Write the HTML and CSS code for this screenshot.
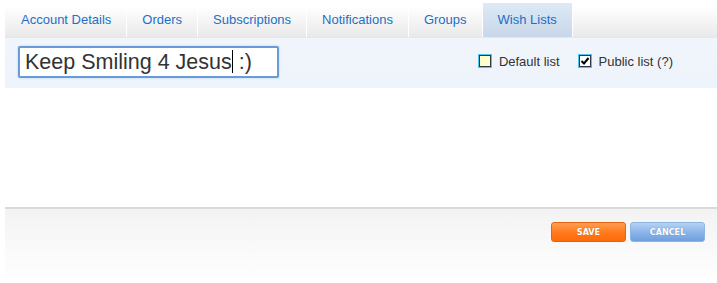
FILE: index.html
```html
<!DOCTYPE html>
<html lang="en">
<head>
<meta charset="UTF-8">
<meta name="viewport" content="width=device-width, initial-scale=1.0">
<title>Wish Lists</title>
<link rel="stylesheet" href="styles.css">
</head>
<body>

<div class="account">
    <ul class="tabs">
        <li class="tab">Account Details</li>
        <li class="tab">Orders</li>
        <li class="tab">Subscriptions</li>
        <li class="tab">Notifications</li>
        <li class="tab">Groups</li>
        <li class="tab active">Wish Lists</li>
    </ul>

    <div class="list-bar">
        <div class="list-name">Keep Smiling 4 Jesus<span class="caret"></span> :)</div>

        <div class="options">
            <label class="option">
                <span class="check"></span>
                Default list
            </label>
            <label class="option">
                <span class="check checked">
                    <svg width="10" height="10" viewBox="0 0 10 10"><path d="M1.5 5 L4 7.5 L8.5 2" fill="none" stroke="#000" stroke-width="2"/></svg>
                </span>
                Public list (?)
            </label>
        </div>
    </div>

    <div class="list-body"></div>

    <div class="footer">
        <button class="btn save">SAVE</button>
        <button class="btn cancel">CANCEL</button>
    </div>
</div>

</body>
</html>
```

FILE: styles.css
```css
body {
    margin: 0;
    font-family: "Liberation Sans", Arial, sans-serif;
    background: #fff;
}
.account {
    padding: 3px 0 0 5px;
}
.tabs {
    display: flex;
    margin: 0;
    padding: 0;
    list-style: none;
    height: 34px;
    border-bottom: 1px solid #e4e8ee;
    background: linear-gradient(#fff, #fff 10%, #e9e9e9);
}
.tab {
    padding: 0 15px;
    line-height: 34px;
    font-size: 13px;
    color: #1d6fc6;
    border-left: 1px solid #fff;
}
.tab:first-child {
    border-left: none;
    padding-left: 16px;
}
.tab.active {
    background: linear-gradient(#dde9f7, #c8d7e8);
    border-right: 1px solid #fff;
}
.list-bar {
    display: flex;
    align-items: center;
    justify-content: space-between;
    height: 50px;
    padding: 0 44px 0 13px;
    background: linear-gradient(#f1f6fc, #edf3fa);
}
.list-name {
    width: 252px;
    height: 28px;
    padding-left: 5px;
    border: 2px solid #6b9bd6;
    border-radius: 2px;
    box-shadow: 0 0 2px #a9c7ec;
    background: #fff;
    font-size: 21.5px;
    line-height: 28px;
    color: #333;
    margin-top: -3px;
}
.caret {
    display: inline-block;
    width: 1px;
    height: 23px;
    background: #000;
    vertical-align: -4px;
}
.options {
    display: flex;
    gap: 19px;
    margin-top: -4px;
}
.option {
    display: flex;
    align-items: center;
    font-size: 13px;
    color: #333;
}
.check {
    display: flex;
    align-items: center;
    justify-content: center;
    width: 10px;
    height: 10px;
    margin-right: 8px;
    border: 1px solid #2c3a4a;
    box-shadow: 0 0 0 1px #52c3ef;
    background: #ffffcc;
}
.check.checked {
    background: #fff;
}
.list-body {
    height: 119px;
}
.footer {
    display: flex;
    justify-content: flex-end;
    gap: 4px;
    height: 60px;
    padding: 13px 12px 0 0;
    border-top: 2px solid #dadada;
    background: linear-gradient(#f3f3f3, #fff);
}
.btn {
    width: 75px;
    height: 20px;
    border-radius: 3px;
    font-family: "DejaVu Sans Condensed", "DejaVu Sans", sans-serif;
    font-weight: bold;
    font-size: 9px;
    color: #fff;
    text-shadow: 0 0 1px rgba(0, 0, 0, 0.25);
}
.save {
    border: 1px solid #e36410;
    background: linear-gradient(#ffa050, #ff7a1e 50%, #ff6a08);
}
.cancel {
    border: 1px solid #8fb4e0;
    background: linear-gradient(#b4d2f4, #8cb6e8 50%, #6e9fdd);
}
```
